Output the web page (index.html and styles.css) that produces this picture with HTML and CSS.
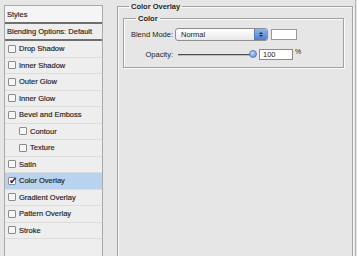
FILE: index.html
```html
<!doctype html>
<html>
<head>
<meta charset="utf-8">
<title>Layer Style - Color Overlay</title>
<link rel="stylesheet" href="styles.css">
</head>
<body>
<div class="dialog">
	<!--左侧样式列表-->
	<div class="sidebar">
		<div class="row head">Styles</div>
		<div class="row blend">Blending Options: Default</div>
		<div class="row"><span class="check"></span>Drop Shadow</div>
		<div class="row"><span class="check"></span>Inner Shadow</div>
		<div class="row"><span class="check"></span>Outer Glow</div>
		<div class="row"><span class="check"></span>Inner Glow</div>
		<div class="row"><span class="check"></span>Bevel and Emboss</div>
		<div class="row sub"><span class="check"></span>Contour</div>
		<div class="row sub"><span class="check"></span>Texture</div>
		<div class="row"><span class="check"></span>Satin</div>
		<div class="row current"><span class="check on">✔</span>Color Overlay</div>
		<div class="row"><span class="check"></span>Gradient Overlay</div>
		<div class="row"><span class="check"></span>Pattern Overlay</div>
		<div class="row"><span class="check"></span>Stroke</div>
	</div>
	<!--右侧设置面板-->
	<div class="main">
		<fieldset class="group outer">
			<legend>Color Overlay</legend>
			<fieldset class="group inner">
				<legend>Color</legend>
				<div class="field">
					<label>Blend Mode:</label>
					<div class="select"><span>Normal</span><i class="stepper"><b class="up"></b><b class="down"></b></i></div>
					<div class="swatch"></div>
				</div>
				<div class="field">
					<label>Opacity:</label>
					<div class="slider"><span class="track"></span><span class="thumb"></span></div>
					<div class="num">100</div>
					<span class="pct">%</span>
				</div>
			</fieldset>
		</fieldset>
	</div>
</div>
</body>
</html>
```

FILE: styles.css
```css
*{
	margin:0;
	padding:0;
	box-sizing:border-box;
}
body{
	background:#e6e6e6;
	font-family:"Liberation Sans",Arial,sans-serif;
	font-size:7.5px;
	color:#1c1c1c;
	overflow:hidden;
}
.dialog{
	display:flex;
	width:356px;
	height:256px;
	border-right:1px solid #b4b4b4;
	overflow:hidden;
}
.sidebar{
	width:99px;
	height:270px;
	margin:5px 0 0 4px;
	border:1px solid #aaaaaa;
	background:#eeeeee;
	-webkit-text-stroke:0.15px #1c1c1c;
}
.row{
	display:flex;
	align-items:center;
	height:16.5px;
	padding-left:3px;
	border-bottom:1px solid #dddddd;
	white-space:nowrap;
}
.row.head{
	height:18px;
	padding-left:2px;
	background:#f5f5f5;
	border-bottom:2px solid #6f6f6f;
}
.row.blend{
	height:17px;
	padding-left:2px;
	border-bottom:2px solid #6f6f6f;
}
.row.sub{
	padding-left:14px;
}
.row.current{
	background:#b9d3ef;
}
.check{
	display:inline-flex;
	align-items:center;
	justify-content:center;
	width:8px;
	height:8px;
	margin-right:3px;
	border:1px solid #8c8c8c;
	border-radius:1px;
	background:#f7f7f7;
	font-size:10px;
	line-height:8px;
	color:#14264f;
	-webkit-text-stroke:0;
}
.check.on{
	background:#fff;
	text-indent:1px;
}
.main{
	margin-left:14px;
	width:236px;
}
.group{
	border:1px solid #a2a2a2;
	box-shadow:1px 1px 0 #fafafa, inset 1px 1px 0 #fafafa;
}
.group legend{
	font-weight:bold;
	padding:0 2px;
	line-height:9px;
}
.outer{
	height:270px;
	margin-top:2px;
	padding:3px 8px 0 5px;
}
.outer legend{
	margin-left:6px;
}
.inner{
	width:221px;
	padding:5px 0 6px 6px;
}
.inner legend{
	margin-left:6px;
}
.field{
	display:flex;
	align-items:center;
	height:13px;
	white-space:nowrap;
}
.field + .field{
	margin-top:7px;
}
.field label{
	flex:none;
	min-width:45px;
	padding-right:2px;
	text-align:right;
}
.select{
	display:flex;
	align-items:center;
	width:93px;
	height:13px;
	border:1px solid #8e8e8e;
	border-radius:3px;
	background:linear-gradient(#ffffff,#e9e9e9);
	overflow:hidden;
}
.select span{
	flex:1;
	padding-left:5px;
}
.stepper{
	display:flex;
	flex-direction:column;
	align-items:center;
	justify-content:center;
	gap:1px;
	width:13px;
	height:100%;
	background:linear-gradient(#8fb6ea,#4a7fd0);
	border-left:1px solid #5a7fb8;
}
.stepper b{
	width:0;
	height:0;
	border-left:2px solid transparent;
	border-right:2px solid transparent;
}
.stepper .up{
	border-bottom:2px solid #1b2a48;
}
.stepper .down{
	border-top:2px solid #1b2a48;
}
.swatch{
	width:26px;
	height:11px;
	margin-left:3px;
	border:1px solid #9a9a9a;
	background:#fff;
}
.slider{
	position:relative;
	width:79px;
	height:13px;
	margin-left:3px;
}
.track{
	position:absolute;
	left:0;
	right:4px;
	top:6px;
	height:2px;
	background:#4c4c4c;
	border-bottom:1px solid #bcbcbc;
}
.thumb{
	position:absolute;
	right:0;
	top:2px;
	width:8px;
	height:8px;
	border-radius:50%;
	background:radial-gradient(circle at 40% 35%,#c8ddf7,#4d86d6);
	border:1px solid #5a7fb8;
}
.num{
	width:34px;
	height:11px;
	margin-left:2px;
	padding-left:3px;
	border:1px solid #8a8a8a;
	background:#fff;
	line-height:9px;
}
.pct{
	margin-left:2px;
	align-self:flex-start;
	font-size:7px;
}
```
